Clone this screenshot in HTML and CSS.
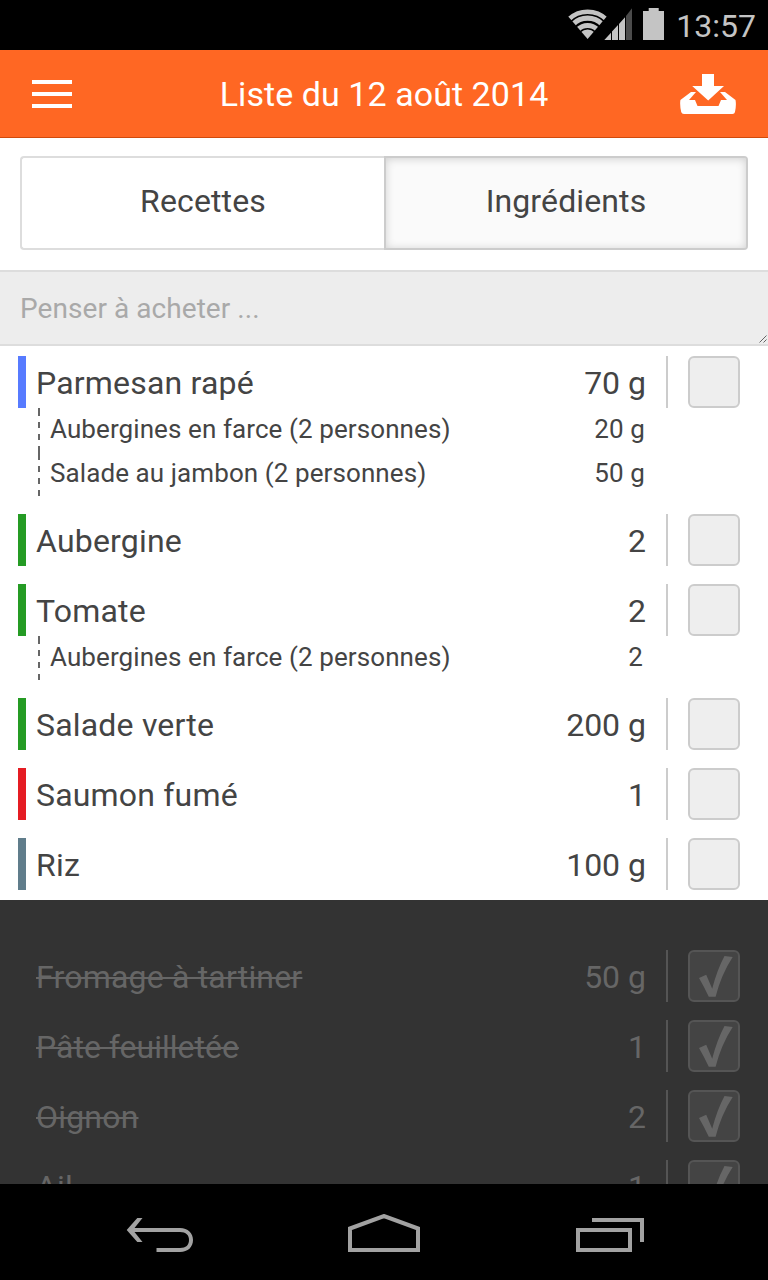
FILE: index.html
```html
<!DOCTYPE html>
<html lang="fr">
<head>
<meta charset="utf-8">
<title>Liste du 12 août 2014</title>
<link rel="stylesheet" href="styles.css">
</head>
<body>
<svg class="defs" width="0" height="0">
  <symbol id="check" viewBox="0 0 48 48"><path d="M34.5 4L42.7 5Q31 23 25.6 44.8H18.8Q14.5 35.5 9 26L16.2 22.8L22.2 36.8Q27 18 34.5 4Z" fill="#666"/></symbol>
</svg>
<div class="screen">
  <div class="status">
    <svg class="status-icons" width="98" height="34" viewBox="568 8 98 34">
      <defs><clipPath id="fan"><path d="M587.6 39L567 15V8H608V15Z"/></clipPath></defs>
      <g clip-path="url(#fan)" fill="none" stroke="#c4c4c4">
        <circle cx="587.6" cy="39" r="27.2" stroke-width="4.4"/>
        <circle cx="587.6" cy="39" r="20.8" stroke-width="5.2"/>
        <circle cx="587.6" cy="39" r="13.6" stroke-width="5"/>
        <circle cx="587.6" cy="39" r="4.8" stroke-width="9.6"/>
      </g>
      <path d="M604.3 40L611 32.7V40ZM612 31.6L618 25V40H612ZM619 24L625 17.3V40H619Z" fill="#c4c4c4"/>
      <path d="M626 16L632 8.3V40H626Z" fill="#4b4b4b"/>
      <path d="M648.700 8H658.700V11H664V40H643V11H648.700Z" fill="#c4c4c4"/>
    </svg>
    <span class="clock">13:57</span>
  </div>
  <header class="bar">
    <svg class="menu" width="40" height="28" viewBox="0 0 40 28"><path d="M0 2H40M0 14H40M0 26H40" stroke="#fff" stroke-width="4"/></svg>
    <h1 class="title">Liste du 12 août 2014</h1>
    <svg class="inbox" width="56" height="40" viewBox="0 0 56 40" fill="#fff"><path d="M22 0H34V12H44L28.200 26.500L12.200 12H22Z"/><path d="M11 18H16L9 26H15L17.500 32H38.500L41 26H47L40 18H45L55.500 26Q56.500 31 55 38Q54.500 40 52.500 40H4Q1.700 40 1.200 38Q-.4 31 .4 26Z"/></svg>
  </header>
  <div class="tabs">
    <div class="tab">Recettes</div>
    <div class="tab active">Ingrédients</div>
  </div>
  <div class="memo">
    <span class="placeholder">Penser à acheter ...</span>
    <svg class="grip" width="8" height="8" viewBox="0 0 8 8"><path d="M.5 7.500L7.500 .5M4.500 7.500L7.500 4.500" stroke="#555" stroke-width=".9"/></svg>
  </div>
  <main class="content">
    <section class="list todo">
      <div class="item">
        <div class="row blue"><span class="name">Parmesan rapé</span><span class="qty">70 g</span><span class="cell"><span class="box"></span></span></div>
        <div class="sub"><span class="sub-name">Aubergines en farce (2 personnes)</span><span class="sub-qty">20 g</span></div>
        <div class="sub"><span class="sub-name">Salade au jambon (2 personnes)</span><span class="sub-qty">50 g</span></div>
      </div>
      <div class="item">
        <div class="row green"><span class="name">Aubergine</span><span class="qty">2</span><span class="cell"><span class="box"></span></span></div>
      </div>
      <div class="item">
        <div class="row green"><span class="name">Tomate</span><span class="qty">2</span><span class="cell"><span class="box"></span></span></div>
        <div class="sub"><span class="sub-name">Aubergines en farce (2 personnes)</span><span class="sub-qty unitless">2</span></div>
      </div>
      <div class="item">
        <div class="row green"><span class="name">Salade verte</span><span class="qty">200 g</span><span class="cell"><span class="box"></span></span></div>
      </div>
      <div class="item">
        <div class="row red"><span class="name">Saumon fumé</span><span class="qty">1</span><span class="cell"><span class="box"></span></span></div>
      </div>
      <div class="item">
        <div class="row slate"><span class="name">Riz</span><span class="qty">100 g</span><span class="cell"><span class="box"></span></span></div>
      </div>
    </section>
    <section class="list done">
      <div class="row"><span class="name">Fromage à tartiner</span><span class="qty">50 g</span><span class="cell"><span class="box"><svg width="48" height="48"><use href="#check"/></svg></span></span></div>
      <div class="row"><span class="name tight">Pâte feuilletée</span><span class="qty">1</span><span class="cell"><span class="box"><svg width="48" height="48"><use href="#check"/></svg></span></span></div>
      <div class="row"><span class="name">Oignon</span><span class="qty">2</span><span class="cell"><span class="box"><svg width="48" height="48"><use href="#check"/></svg></span></span></div>
      <div class="row"><span class="name">Ail</span><span class="qty">1</span><span class="cell"><span class="box"><svg width="48" height="48"><use href="#check"/></svg></span></span></div>
    </section>
  </main>
  <nav class="nav">
    <svg width="68" height="40" viewBox="126 1214 68 40"><path d="M137.300 1218H142.500L134.500 1228H180C188 1228 193 1233 193 1240S188 1252 180 1252H156.500V1248H180C186 1248 189 1245 189 1240S186 1232 180 1232H134.500L142.500 1242H137.300L126.700 1230Z" fill="#a2a2a2"/></svg>
    <svg class="home" width="72" height="40" viewBox="348 1214 72 40"><path d="M350 1250V1228.500L384 1216L418 1228.500V1250Z" fill="none" stroke="#a2a2a2" stroke-width="4"/></svg>
    <svg width="68" height="40" viewBox="576 1214 68 40"><path d="M578 1230H630V1250H578ZM592 1220H642V1242" fill="none" stroke="#a2a2a2" stroke-width="4"/></svg>
  </nav>
</div>
</body>
</html>
```

FILE: styles.css
```css
* { box-sizing: border-box; }
body { margin: 0; background: #000; font-family: Roboto, "Liberation Sans", sans-serif; color: #444; }
svg { display: block; flex: none; }
.defs { position: absolute; }
.screen { width: 768px; height: 1280px; display: flex; flex-direction: column; overflow: hidden; background: #fff; }
.screen > * { flex: none; }

.status { height: 50px; padding-right: 12px; background: #000; display: flex; align-items: center; justify-content: space-between; padding-left: 568px; }
.clock { font-size: 32px; line-height: 50px; padding-top: 2px; color: #c4c4c4; white-space: nowrap; }

.bar { height: 88px; padding: 0 32px; background: #ff6723; border-bottom: 1px solid #d04a0c; display: flex; align-items: center; justify-content: space-between; }
.menu { margin-right: 16px; }
.title { margin: 0; font-size: 34px; line-height: 40px; font-weight: 400; color: #fff; letter-spacing: .06px; white-space: nowrap; }

.tabs { height: 132px; padding: 18px 20px 20px; display: grid; grid-template-columns: 364px 364px; }
.tab { border: 2px solid #ddd; border-right: 0; border-radius: 4px 0 0 4px; display: flex; align-items: center; justify-content: center; font-size: 32px; letter-spacing: .13px; padding-bottom: 4px; }
.tab.active { border: 2px solid #ccc; border-radius: 0 4px 4px 0; background: #fafafa; box-shadow: inset 0 1px 9px rgba(0,0,0,.17); }

.memo { position: relative; height: 76px; padding: 0 20px; background: #ededed; border-top: 2px solid #ddd; border-bottom: 2px solid #ddd; display: flex; align-items: center; }
.placeholder { font-size: 28px; color: #a9a9a9; letter-spacing: .06px; }
.grip { position: absolute; right: 1px; bottom: 1px; }

.content { height: 838px; overflow: hidden; }
.list { display: flex; flex-direction: column; gap: 18px; padding: 10px 28px 10px 18px; }
.row { height: 52px; display: flex; align-items: center; border-left: 8px solid transparent; padding-left: 10px; font-size: 32px; letter-spacing: .19px; line-height: 52px; white-space: nowrap; }
.blue { border-color: #577bff; }
.green { border-color: #259b24; }
.red { border-color: #e51c23; }
.slate { border-color: #607d8b; }
.name { flex: 1; padding-top: 2px; }
.tight { letter-spacing: 0; }
.qty { padding: 2px 20px 0 0; letter-spacing: 0; }
.cell { border-left: 2px solid #ccc; padding-left: 20px; }
.box { display: block; width: 52px; height: 52px; border: 2px solid #ccc; border-radius: 6px; background: #eee; }
.sub { height: 44px; margin-left: 20px; padding: 0 95px 0 12px; display: flex; justify-content: space-between; font-size: 26px; letter-spacing: .09px; line-height: 43px; white-space: nowrap;
  background: linear-gradient(#666 0 8px, transparent 8px 14px, #666 14px 20px, transparent 20px 26px, #666 26px 32px, transparent 32px 38px, #666 38px) 0 0 / 2px 44px no-repeat; }
.unitless { padding-right: 2px; }

.done { height: 400px; padding-top: 50px; background: #333; color: #666; }
.done .name { flex: none; margin-right: auto; text-decoration: line-through; text-decoration-thickness: 2px; }
.done .cell { border-color: #555; }
.done .box { background: #444; border-color: #555; }

.nav { height: 96px; padding: 4px 124px 0 126px; background: #000; display: flex; align-items: center; justify-content: space-between; }
.home { margin-right: 2px; }
```
